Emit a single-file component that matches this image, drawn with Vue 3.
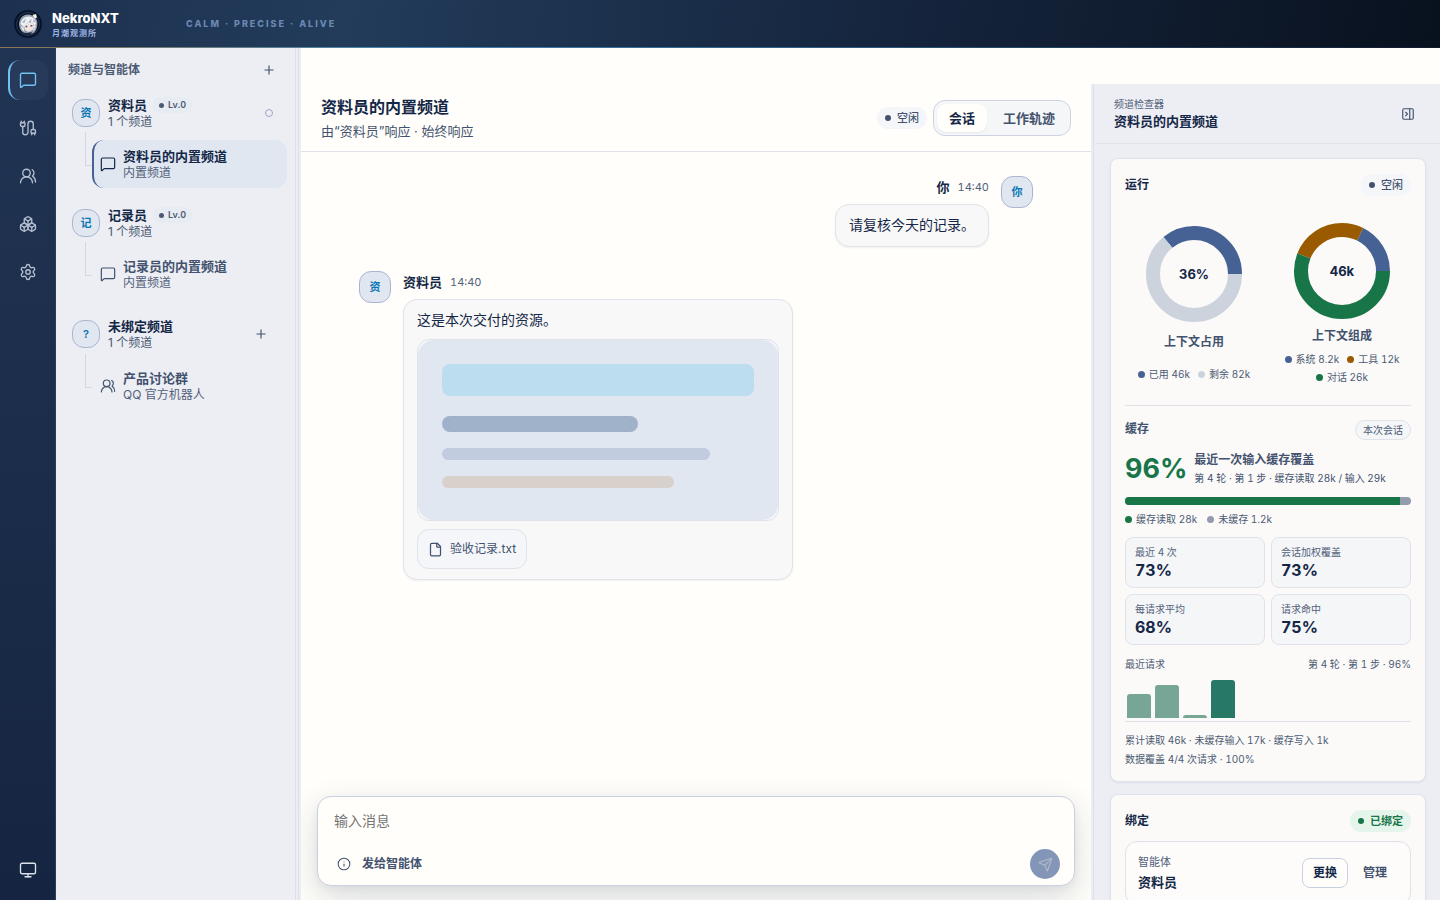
<script setup>
import { h } from 'vue'

const paths = {
  message: ['M22 17a2 2 0 0 1-2 2H6.828a2 2 0 0 0-1.414.586l-2.202 2.202A.71.71 0 0 1 2 21.286V5a2 2 0 0 1 2-2h16a2 2 0 0 1 2 2z'],
  cable: [
    'M17 19a1 1 0 0 1-1-1v-2a2 2 0 0 1 2-2h2a2 2 0 0 1 2 2v2a1 1 0 0 1-1 1z',
    'M17 21v-2', 'M19 14V6.5a1 1 0 0 0-7 0v11a1 1 0 0 1-7 0V10', 'M21 21v-2', 'M3 5V3',
    'M4 10a2 2 0 0 1-2-2V6a1 1 0 0 1 1-1h4a1 1 0 0 1 1 1v2a2 2 0 0 1-2 2z', 'M7 5V3',
  ],
  users: ['M18 21a8 8 0 0 0-16 0', 'M5 8a5 5 0 1 0 10 0a5 5 0 1 0-10 0', 'M22 20c0-3.37-2-6.5-4-8a5 5 0 0 0-.45-8.3'],
  boxes: [
    'M2.97 12.92A2 2 0 0 0 2 14.63v3.24a2 2 0 0 0 .97 1.71l3 1.8a2 2 0 0 0 2.06 0L12 19v-5.5l-5-3-4.03 2.42Z',
    'm7 16.5-4.74-2.85', 'm7 16.5 5-3', 'M7 16.5v5.17',
    'M12 13.5V19l3.97 2.38a2 2 0 0 0 2.06 0l3-1.8a2 2 0 0 0 .97-1.71v-3.24a2 2 0 0 0-.97-1.71L17 10.5l-5 3Z',
    'm17 16.5-5-3', 'm17 16.5 4.74-2.85', 'M17 16.5v5.17',
    'M7.97 4.42A2 2 0 0 0 7 6.13v4.37l5 3 5-3V6.13a2 2 0 0 0-.97-1.71l-3-1.8a2 2 0 0 0-2.06 0l-3 1.8Z',
    'M12 8 7.26 5.15', 'm12 8 4.74-2.85', 'M12 13.5V8',
  ],
  settings: [
    'M9.671 4.136a2.34 2.34 0 0 1 4.659 0 2.34 2.34 0 0 0 3.319 1.915 2.34 2.34 0 0 1 2.33 4.033 2.34 2.34 0 0 0 0 3.831 2.34 2.34 0 0 1-2.33 4.033 2.34 2.34 0 0 0-3.319 1.915 2.34 2.34 0 0 1-4.659 0 2.34 2.34 0 0 0-3.32-1.915 2.34 2.34 0 0 1-2.33-4.033 2.34 2.34 0 0 0 0-3.831A2.34 2.34 0 0 1 6.35 6.051a2.34 2.34 0 0 0 3.319-1.915',
    'M9 12a3 3 0 1 0 6 0a3 3 0 1 0-6 0',
  ],
  monitor: ['M4 3h16a2 2 0 0 1 2 2v10a2 2 0 0 1-2 2H4a2 2 0 0 1-2-2V5a2 2 0 0 1 2-2z', 'M8 21h8', 'M12 17v4'],
  plus: ['M5 12h14', 'M12 5v14'],
  panel: ['M5 3h14a2 2 0 0 1 2 2v14a2 2 0 0 1-2 2H5a2 2 0 0 1-2-2V5a2 2 0 0 1 2-2z', 'M15 3v18', 'm8 9 3 3-3 3'],
  file: [
    'M6 22a2 2 0 0 1-2-2V4a2 2 0 0 1 2-2h8a2.4 2.4 0 0 1 1.704.706l3.588 3.588A2.4 2.4 0 0 1 20 8v12a2 2 0 0 1-2 2z',
    'M14 2v5a1 1 0 0 0 1 1h5',
  ],
  info: ['M2 12a10 10 0 1 0 20 0a10 10 0 1 0-20 0', 'M12 16v-4', 'M12 8h.01'],
  send: [
    'M14.536 21.686a.5.5 0 0 0 .937-.024l6.5-19a.496.496 0 0 0-.635-.635l-19 6.5a.5.5 0 0 0-.024.937l7.93 3.18a2 2 0 0 1 1.112 1.11z',
    'm21.854 2.147-10.94 10.939',
  ],
}

const Icon = (props) =>
  h('svg', {
    width: props.size, height: props.size, viewBox: '0 0 24 24', fill: 'none',
    stroke: 'currentColor', 'stroke-width': props.weight || 1.8,
    'stroke-linecap': 'round', 'stroke-linejoin': 'round', 'aria-hidden': 'true',
  }, paths[props.name].map((d) => h('path', { d })))
Icon.props = ['name', 'size', 'weight']

const nav = [
  { icon: 'message', label: '频道', active: true },
  { icon: 'cable', label: '连接' },
  { icon: 'users', label: '智能体' },
  { icon: 'boxes', label: '扩展' },
  { icon: 'settings', label: '设置' },
]

const groups = [
  { mark: '资', name: '资料员', level: 'Lv.0', count: '1 个频道', end: 'ring', item: { icon: 'message', title: '资料员的内置频道', sub: '内置频道', active: true } },
  { mark: '记', name: '记录员', level: 'Lv.0', count: '1 个频道', item: { icon: 'message', title: '记录员的内置频道', sub: '内置频道' } },
  { mark: '?', name: '未绑定频道', count: '1 个频道', end: 'add', item: { icon: 'users', title: '产品讨论群', sub: 'QQ 官方机器人' } },
]

// Arc lengths are percentages of the ring, laid counter-clockwise from three o'clock.
const donuts = [
  {
    value: '36%', title: '上下文占用',
    arcs: [{ color: '#466294', from: 0, size: 36 }, { color: '#ccd3dd', from: 36, size: 64 }],
    legend: [{ color: '#466294', text: '已用 46k' }, { color: '#ccd3dd', text: '剩余 82k' }],
  },
  {
    value: '46k', title: '上下文组成',
    arcs: [{ color: '#466294', from: 0, size: 17.7 }, { color: '#9a5b00', from: 17.7, size: 26.3 }, { color: '#187548', from: 44, size: 56 }],
    legend: [{ color: '#466294', text: '系统 8.2k' }, { color: '#9a5b00', text: '工具 12k' }, { color: '#187548', text: '对话 26k' }],
  },
]

const metrics = [
  { label: '最近 4 次', value: '73%' },
  { label: '会话加权覆盖', value: '73%' },
  { label: '每请求平均', value: '68%' },
  { label: '请求命中', value: '75%' },
]

const bars = [24, 33, 3, 38]
</script>

<template>
  <div class="app">
    <header class="topbar">
      <svg class="logo" viewBox="0 0 28 28" aria-hidden="true">
        <circle cx="14" cy="14" r="14" fill="#07142e" />
        <circle cx="14" cy="14" r="11.5" fill="none" stroke="#4a4a50" stroke-width=".6" />
        <path d="M5.500 17C4 12 6.500 6.500 11 5c2-.8 5-.8 7 .5C22 7 24 11 23.300 15c-.3 3-1.300 5.500-3 7.500l-3 1.500-6-.5C8 22.500 6.300 20 5.500 17z" fill="#99a2b3" />
        <path d="M6.500 14c.5-4.500 4-7.500 8-7.500 4.500 0 7.500 3 7.500 7l-1.500 3-2-4-3 3-2.500-3-3 4.500z" fill="#eef0f4" />
        <path d="M10 15.500l3-3 2 2.500 3.500-2.500 1.500 4-1.500 3.500-4 2-3.500-2z" fill="#f4e3df" />
        <path d="M7 16l2.500 1 1 4.500L8 20zM20.500 15l1.500 1-2 5-1-1z" fill="#dfe3ea" />
        <path d="M8 12.500l4-4.500-1.500 5zM14 12.500l3.500-4-.5 4.500zM19 12l1-3.500 1.500 4z" fill="#aab2c1" />
        <path d="M11.500 16.500h1.800M16.500 16l1.900-.3" stroke="#3f4e6e" stroke-width="1.300" />
        <path d="M18.500 5l3.500-1 1 3.500-2.500 1z" fill="#f6f2e6" />
        <path d="M8 22.500l5 .5 5-1-1.500 3-6 .3z" fill="#1b2a47" />
      </svg>
      <div class="brand">
        <strong>NekroNXT</strong>
        <span>月潮观测所</span>
      </div>
      <p class="motto">CALM · PRECISE · ALIVE</p>
    </header>

    <div class="body">
      <nav class="rail" aria-label="主导航">
        <button v-for="n in nav" :key="n.icon" type="button" class="rail-btn" :class="{ active: n.active }" :aria-label="n.label">
          <Icon :name="n.icon" :size="18" />
        </button>
        <button type="button" class="rail-btn last" aria-label="显示"><Icon name="monitor" :size="18" /></button>
      </nav>

      <aside class="sidebar">
        <div class="side-head">
          <h2>频道与智能体</h2>
          <button type="button" class="plain" aria-label="新建"><Icon name="plus" :size="14" :weight="2" /></button>
        </div>
        <section v-for="g in groups" :key="g.name" class="group">
          <div class="group-head" :class="{ tall: g.end === 'add' }">
            <span class="avatar small">{{ g.mark }}</span>
            <div class="group-text">
              <div class="group-name">
                <strong>{{ g.name }}</strong>
                <span v-if="g.level" class="level"><i></i>{{ g.level }}</span>
              </div>
              <span class="count">{{ g.count }}</span>
            </div>
            <span v-if="g.end === 'ring'" class="ring"></span>
            <button v-if="g.end === 'add'" type="button" class="plain add" aria-label="添加频道"><Icon name="plus" :size="14" :weight="2" /></button>
          </div>
          <div class="branch">
            <button type="button" class="channel" :class="{ active: g.item.active }">
              <Icon :name="g.item.icon" :size="16" />
              <span class="channel-text">
                <strong>{{ g.item.title }}</strong>
                <span>{{ g.item.sub }}</span>
              </span>
            </button>
          </div>
        </section>
      </aside>
      <div class="splitter"></div>

      <div class="work">
        <main class="chat">
          <header class="chat-head">
            <div class="chat-title">
              <h1>资料员的内置频道</h1>
              <p>由“资料员”响应 · 始终响应</p>
            </div>
            <span class="status"><i></i>空闲</span>
            <div class="tabs" role="tablist">
              <button type="button" role="tab" aria-selected="true" class="on">会话</button>
              <button type="button" role="tab" aria-selected="false">工作轨迹</button>
            </div>
          </header>

          <div class="messages">
            <article class="msg mine">
              <span class="avatar">你</span>
              <div class="msg-body">
                <div class="meta"><strong>你</strong><time>14:40</time></div>
                <div class="bubble"><p>请复核今天的记录。</p></div>
              </div>
            </article>
            <article class="msg">
              <span class="avatar">资</span>
              <div class="msg-body">
                <div class="meta"><strong>资料员</strong><time>14:40</time></div>
                <div class="bubble rich">
                  <p>这是本次交付的资源。</p>
                  <div class="preview">
                    <svg viewBox="0 0 360 180" role="img" aria-label="资源预览">
                      <rect width="360" height="180" rx="16" fill="#e1e7f1" />
                      <rect x="24" y="24" width="312" height="32" rx="8" fill="#bcdcef" />
                      <rect x="24" y="76" width="196" height="16" rx="8" fill="#a0b1ca" />
                      <rect x="24" y="108" width="268" height="12" rx="6" fill="#c2ccdf" />
                      <rect x="24" y="136" width="232" height="12" rx="6" fill="#d8d1cb" />
                    </svg>
                  </div>
                  <a class="file" href="#"><Icon name="file" :size="15" :weight="2" />验收记录.txt</a>
                </div>
              </div>
            </article>
          </div>

          <form class="composer" @submit.prevent>
            <textarea rows="1" placeholder="输入消息" aria-label="输入消息"></textarea>
            <div class="composer-row">
              <button type="button" class="target"><Icon name="info" :size="14" />发给智能体</button>
              <button type="submit" class="send" aria-label="发送"><Icon name="send" :size="15" /></button>
            </div>
          </form>
        </main>

        <div class="splitter right"></div>

        <aside class="inspector">
          <header class="insp-head">
            <div>
              <span>频道检查器</span>
              <h2>资料员的内置频道</h2>
            </div>
            <button type="button" class="plain" aria-label="收起检查器"><Icon name="panel" :size="14" :weight="2" /></button>
          </header>
          <div class="cards">
            <section class="card">
              <div class="card-head">
                <h3>运行</h3>
                <span class="status"><i></i>空闲</span>
              </div>
              <div class="donuts">
                <figure v-for="d in donuts" :key="d.title" class="donut">
                  <div class="ring-chart">
                    <svg viewBox="0 0 96 96" aria-hidden="true">
                      <g transform="translate(0 96) scale(1 -1)">
                        <circle
                          v-for="a in d.arcs" :key="a.color" cx="48" cy="48" r="41" fill="none" stroke-width="14"
                          :stroke="a.color" pathLength="100" :stroke-dasharray="`${a.size} ${100 - a.size}`" :stroke-dashoffset="-a.from"
                        />
                      </g>
                    </svg>
                    <strong>{{ d.value }}</strong>
                  </div>
                  <figcaption>{{ d.title }}</figcaption>
                  <ul class="legend centered">
                    <li v-for="l in d.legend" :key="l.text"><i :style="{ background: l.color }"></i>{{ l.text }}</li>
                  </ul>
                </figure>
              </div>

              <div class="cache">
                <div class="cache-head">
                  <h4>缓存</h4>
                  <span class="scope">本次会话</span>
                </div>
                <div class="cover">
                  <strong>96%</strong>
                  <div>
                    <b>最近一次输入缓存覆盖</b>
                    <span>第 4 轮 · 第 1 步 · 缓存读取 28k / 输入 29k</span>
                  </div>
                </div>
                <div class="meter"><i :style="{ width: '96%' }"></i></div>
                <ul class="legend">
                  <li><i :style="{ background: '#187548' }"></i>缓存读取 28k</li>
                  <li><i :style="{ background: '#949bae' }"></i>未缓存 1.2k</li>
                </ul>
                <dl class="metrics">
                  <div v-for="m in metrics" :key="m.label">
                    <dt>{{ m.label }}</dt>
                    <dd>{{ m.value }}</dd>
                  </div>
                </dl>
                <div class="recent"><span>最近请求</span><span>第 4 轮 · 第 1 步 · 96%</span></div>
                <div class="bars">
                  <i v-for="(b, n) in bars" :key="n" :class="{ now: n === 3 }" :style="{ height: b + 'px' }"></i>
                </div>
                <p class="note">累计读取 46k · 未缓存输入 17k · 缓存写入 1k</p>
                <p class="note">数据覆盖 4/4 次请求 · 100%</p>
              </div>
            </section>

            <section class="card">
              <div class="card-head">
                <h3>绑定</h3>
                <span class="status ok"><i></i>已绑定</span>
              </div>
              <div class="bind">
                <div class="bind-text">
                  <span>智能体</span>
                  <strong>资料员</strong>
                </div>
                <button type="button" class="outlined">更换</button>
                <button type="button">管理</button>
              </div>
            </section>
          </div>
        </aside>
      </div>
    </div>
  </div>
</template>

<style>
html, body, #app { height: 100%; }
body { margin: 0; overflow: hidden; }
</style>

<style scoped>
.app, .app * { box-sizing: border-box; }
.app {
  display: flex;
  flex-direction: column;
  height: 100vh;
  overflow: hidden;
  background: #fffefa;
  color: #142747;
  font-family: Inter, "Noto Sans CJK SC", sans-serif;
  font-size: 12px;
  line-height: 18px;
}
h1, h2, h3, h4, p, ul, dl, dd, figure { margin: 0; padding: 0; }
ul { list-style: none; }
button, textarea { font: inherit; color: inherit; border: 0; background: none; padding: 0; margin: 0; }
svg { display: block; flex: none; }
strong, b, h1, h2, h3, h4 { font-weight: 600; }

.topbar {
  position: relative;
  display: flex;
  align-items: center;
  flex: none;
  height: 48px;
  padding: 0 14px;
  background: linear-gradient(100deg, #1d304f 0%, #223c5a 24%, #16263f 60%, #09111e 100%);
}
.topbar::after {
  content: "";
  position: absolute;
  inset: auto 0 0 0;
  height: 1px;
  background: linear-gradient(90deg, #8d7650, #4386b4 28%, #2f5f87 55%, #101b2d);
}
.logo { width: 28px; height: 28px; }
.brand { display: flex; flex-direction: column; width: 134px; margin-left: 10px; gap: 1px; }
.brand strong { color: #fff; font-size: 13px; line-height: 16px; font-weight: 800; }
.brand span { color: #9db5e4; font-size: 8px; line-height: 12px; font-weight: 600; letter-spacing: 1px; }
.motto { color: #6c88b2; font-size: 9px; line-height: 12px; font-weight: 800; letter-spacing: 2px; }

.body { display: flex; flex: 1; min-height: 0; }
.rail {
  display: flex;
  flex-direction: column;
  align-items: center;
  gap: 8px;
  flex: none;
  width: 56px;
  padding: 12px 0 10px;
  border-right: 1px solid #2a3d5b;
  background: linear-gradient(180deg, #213453, #152541);
}
.rail-btn {
  display: grid;
  place-items: center;
  width: 40px;
  height: 40px;
  border-radius: 12px;
  color: #b4bfd0;
}
.rail-btn.active { padding-right: 2px; color: #6fc3f2; background: #283a59; border-left: 2px solid #6fc3f2; }
.rail-btn.last { margin-top: auto; color: #dbe2ec; }

.sidebar { flex: none; width: 240px; background: #edeef4; border-right: 1px solid #dcdfe8; }
.side-head { display: flex; align-items: center; justify-content: space-between; height: 44px; padding: 0 19px 0 12px; margin-bottom: 4px; color: #4c5a73; }
.side-head h2 { font-size: 12px; line-height: 18px; }
.plain { display: grid; place-items: center; color: #43526e; }
.group { padding: 0 8px 0 16px; margin-bottom: 18px; }
.group-head { display: flex; align-items: center; height: 34px; gap: 8px; }
.group-head.tall { height: 36px; }
.avatar {
  display: grid;
  place-items: center;
  flex: none;
  width: 32px;
  height: 32px;
  border: 1px solid #a9b5d0;
  border-radius: 12px;
  background: #e1e7f1;
  color: #0b76b4;
  font-size: 11px;
  font-weight: 600;
}
.avatar.small { width: 28px; height: 28px; }
.group-text { flex: 1; color: #4c5a73; }
.count { display: block; line-height: 16px; }
.group-name { display: flex; align-items: center; gap: 6px; height: 18px; line-height: 18px; }
.group-name strong { font-size: 13px; color: #142747; }
.level { display: flex; align-items: center; gap: 4px; height: 16px; padding: 0 6px; border-radius: 8px; background: #e7ebf2; font-size: 9px; font-weight: 600; font-variant-numeric: tabular-nums; }
.level i { width: 5px; height: 5px; border-radius: 50%; background: #4c5a73; }
.ring { width: 8px; height: 8px; margin-right: 14px; border: 1px solid #9aa8c4; border-radius: 50%; }
.add { margin-right: 19px; }
.branch { position: relative; margin-top: 10px; padding-left: 20px; }
.branch::before {
  content: "";
  position: absolute;
  left: 13px;
  top: -8px;
  width: 6px;
  height: 33px;
  border: solid #cfd7e2;
  border-width: 0 0 1px 1px;
}
.channel { display: flex; align-items: center; gap: 7px; width: 100%; height: 48px; padding: 0 6px; border-left: 2px solid transparent; border-radius: 12px; text-align: left; color: #43526e; }
.channel.active { border-left-color: #466294; background: #e0e7f1; }
.channel.active, .channel.active strong { color: #142747; }
.channel-text { display: flex; flex-direction: column; line-height: 16px; }
.channel-text strong { font-size: 13px; line-height: 18px; }
.channel-text span { color: #53617a; }
.splitter { flex: none; width: 5px; background: linear-gradient(90deg, #edeef4 2px, #dcdfe8 2px, #dcdfe8 3px, #edeef4 3px); }

.work { display: flex; flex: 1; min-width: 0; padding-top: 36px; background: #fffefa; }
.chat { display: flex; flex-direction: column; flex: 1; min-width: 0; overflow: hidden; }
.chat-head { display: flex; align-items: center; flex: none; height: 68px; padding: 0 20px; border-bottom: 1px solid #dfe2e9; }
.chat-title { flex: 1; }
.chat-title h1 { font-size: 16px; line-height: 24px; }
.chat-title p { margin-top: 2px; color: #43526e; font-size: 13px; line-height: 20px; }
.status { display: flex; align-items: center; gap: 6px; height: 22px; padding: 0 8px; border-radius: 11px; background: #f5f6f9; color: #43526e; font-size: 11px; font-weight: 500; }
.status i { width: 6px; height: 6px; border-radius: 50%; background: currentColor; }
.status.ok { background: #e6f5ec; color: #187548; font-weight: 600; }
.tabs { display: flex; height: 36px; margin-left: 6px; padding: 3px; border: 1px solid #cdd3e2; border-radius: 12px; background: #f5f6f8; }
.tabs button { padding: 0 12px; border-radius: 9px; color: #43526e; font-size: 13px; font-weight: 600; }
.tabs button + button { padding: 0 12px 0 16px; }
.tabs .on { color: #142747; background: #fffefa; box-shadow: 0 1px 2px rgba(20, 39, 71, .06); }

.messages { flex: 1; min-height: 0; padding: 24px 58px; }
.msg { display: flex; gap: 12px; margin-bottom: 24px; }
.msg.mine { flex-direction: row-reverse; }
.meta { display: flex; align-items: center; gap: 8px; height: 22px; margin-bottom: 6px; }
.mine .meta { justify-content: flex-end; }
.meta strong { font-size: 13px; }
.meta time { color: #53617a; font-size: 11px; font-variant-numeric: tabular-nums; }
.bubble { padding: 9px 13px 10px; border: 1px solid #e0e3e9; border-radius: 14px; background: #f8f8f8; box-shadow: 0 1px 2px rgba(20, 39, 71, .06); }
.bubble p { font-size: 14px; line-height: 22px; }
.preview { margin: 8px 0; width: 362px; max-width: 100%; border: 1px solid #dfe3ea; border-radius: 12px; overflow: hidden; background: #f5f6f9; }
.preview svg { width: 100%; height: auto; }
.file { display: inline-flex; align-items: center; gap: 7px; height: 40px; padding: 0 10px; border: 1px solid #dfe3ea; border-radius: 12px; background: #f5f6f9; color: #43526e; font-size: 12px; text-decoration: none; vertical-align: top; }

.composer { position: relative; flex: none; margin: 0 16px 14px; padding: 12px 14px 6px 16px; border: 1px solid #c9d0df; border-radius: 14px; background: #fffefa; box-shadow: 0 12px 32px rgba(20, 39, 71, .16), 0 2px 8px rgba(20, 39, 71, .05); }
.composer textarea { display: block; width: 100%; height: 24px; resize: none; outline: 0; font-size: 14px; line-height: 24px; }
.composer textarea::placeholder { color: #757575; }
.composer-row { display: flex; align-items: center; justify-content: space-between; margin-top: 16px; }
.target { display: flex; align-items: center; gap: 11px; padding-left: 3px; color: #43526e; font-size: 12px; font-weight: 600; }
.send { display: grid; place-items: center; width: 30px; height: 30px; border-radius: 50%; background: #8496b8; color: #b1b9c8; }

.inspector { display: flex; flex-direction: column; flex: none; width: 344px; background: #edeef4; overflow: hidden; font-variant-numeric: tabular-nums; }
.insp-head { display: flex; align-items: center; justify-content: space-between; flex: none; height: 60px; padding: 0 25px 0 18px; border-bottom: 1px solid #dfe2e9; }
.insp-head span { display: block; color: #53617a; font-size: 10px; line-height: 14px; }
.insp-head h2 { font-size: 13px; line-height: 20px; }
.cards { display: flex; flex-direction: column; gap: 12px; padding: 14px; }
.card { flex: none; padding: 14px 14px 12px; border: 1px solid #e0e3ea; border-radius: 8px; background: #fbfaf9; box-shadow: 0 1px 2px rgba(20, 39, 71, .08); }
.card-head { display: flex; align-items: center; justify-content: space-between; height: 24px; }
.card-head h3 { font-size: 12px; line-height: 18px; }
.donuts { display: grid; grid-template-columns: 1fr 1fr; gap: 10px; margin-top: 26px; padding-bottom: 22px; border-bottom: 1px solid #dfe2e9; }
.donut { display: grid; justify-items: center; row-gap: 8px; }
.ring-chart { display: grid; place-items: center; align-self: center; width: 96px; height: 96px; }
.ring-chart > * { grid-area: 1 / 1; }
.ring-chart svg { width: 96px; height: 96px; }
.ring-chart strong { font-size: 13px; font-weight: 700; }
.donut figcaption { color: #43526e; font-weight: 600; line-height: 18px; }
.legend { display: flex; flex-wrap: wrap; gap: 6px 10px; color: #4c5a73; font-size: 10px; line-height: 12px; }
.legend.centered { justify-content: center; align-self: center; column-gap: 8px; }
.legend li { display: flex; align-items: center; gap: 4px; }
.legend i { width: 7px; height: 7px; border-radius: 50%; }

.cache-head { display: flex; align-items: flex-start; justify-content: space-between; height: 20px; margin-top: 14px; }
.cache-head h4 { color: #43526e; font-size: 12px; line-height: 18px; }
.scope { height: 20px; padding: 0 7px; border: 1px solid #dfe2e9; border-radius: 10px; background: #f5f6f8; color: #4c5a73; font-size: 10px; line-height: 18px; }
.cover { display: flex; align-items: center; gap: 7px; height: 36px; margin-top: 11px; }
.cover > strong { color: #187548; font-size: 27px; font-weight: 700; }
.cover b, .cover span { display: block; line-height: 18px; color: #43526e; white-space: nowrap; }
.cover span { font-size: 10px; }
.meter { height: 8px; margin: 10px 0 8px; border-radius: 4px; background: #949bae; overflow: hidden; }
.meter i { display: block; height: 100%; background: #187548; }
.metrics { display: grid; grid-template-columns: 1fr 1fr; gap: 6px; margin-top: 12px; }
.metrics div { height: 51px; padding: 7px 9px; border: 1px solid #dfe2e9; border-radius: 8px; background: #f5f6f8; }
.metrics dt { color: #53617a; font-size: 10px; line-height: 14px; }
.metrics dd { font-size: 16px; line-height: 22px; font-weight: 700; }
.recent { display: flex; justify-content: space-between; margin-top: 11px; color: #4c5a73; font-size: 10px; line-height: 16px; }
.bars { display: flex; align-items: flex-end; gap: 4px; height: 50px; margin-bottom: 9px; padding: 0 2px 3px; border-bottom: 1px solid #dfe2e9; }
.bars i { width: 24px; border-radius: 3px 3px 0 0; background: #77a596; }
.bars .now { background: #277865; }
.note { color: #4c5a73; font-size: 10px; line-height: 19px; }

.bind { display: flex; align-items: center; margin-top: 8px; padding: 11px 12px; border: 1px solid #dfe2e9; border-radius: 12px; background: #fdfcfa; }
.bind-text { flex: 1; }
.bind-text span, .bind-text strong { display: block; line-height: 18px; }
.bind-text span { color: #53617a; font-size: 11px; }
.bind-text strong { font-size: 13px; line-height: 22px; }
.bind button { padding: 0 11px; height: 30px; color: #43526e; font-weight: 600; margin-left: 4px; }
.bind .outlined { padding: 0 10px; border: 1px solid #c9d0df; border-radius: 8px; background: #fffefa; color: #142747; }
</style>
